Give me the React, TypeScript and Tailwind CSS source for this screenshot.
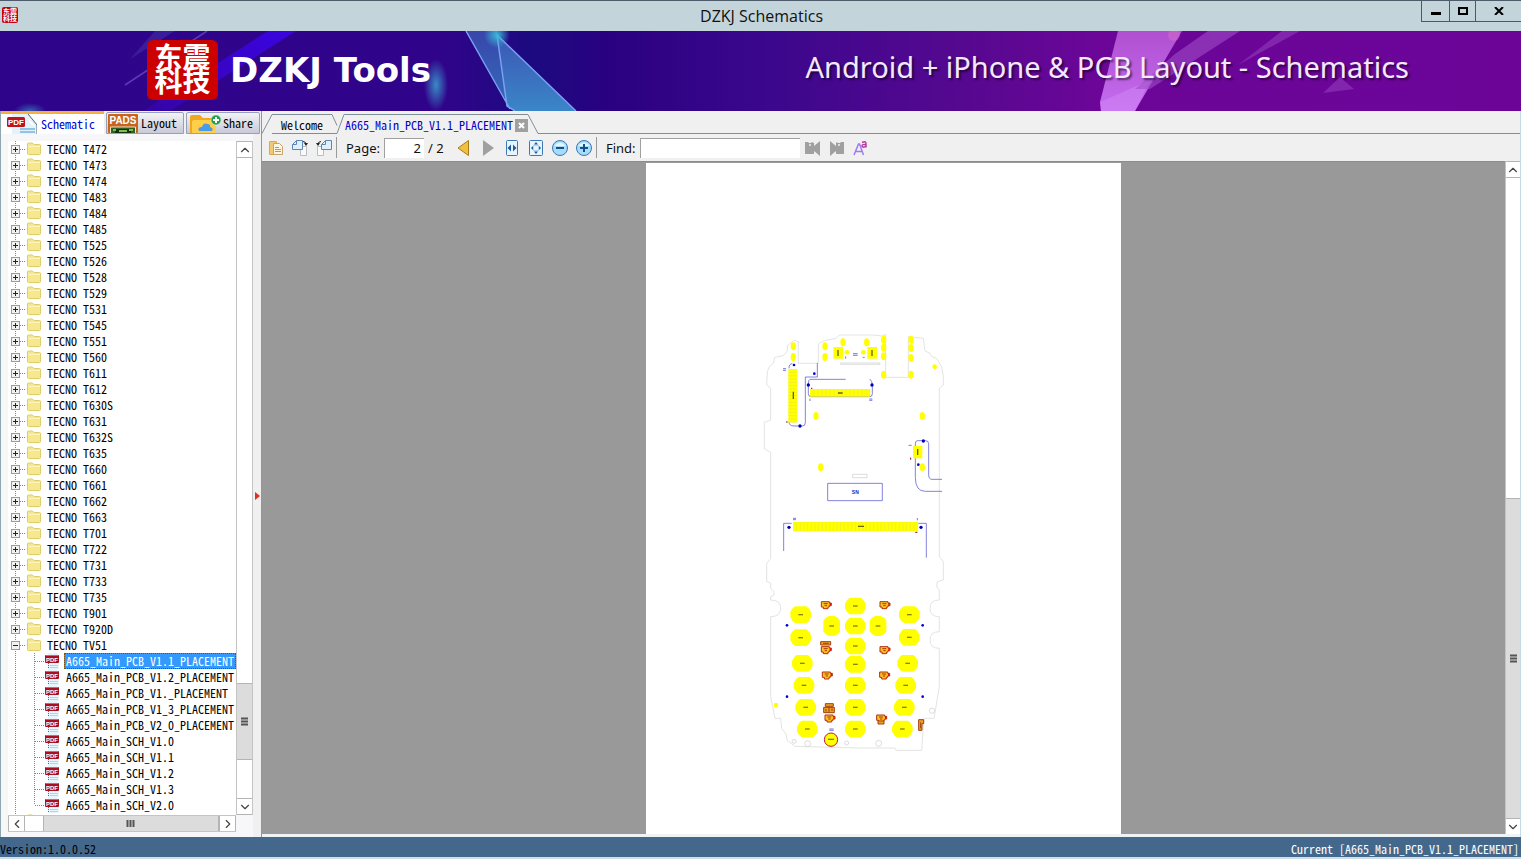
import { useState } from "react";
import type { ReactNode } from "react";
import { ChevronDown, ChevronLeft, ChevronRight, ChevronUp } from "lucide-react";

const models = [
  "T472", "T473", "T474", "T483", "T484", "T485", "T525", "T526", "T528",
  "T529", "T531", "T545", "T551", "T560", "T611", "T612", "T630S", "T631",
  "T632S", "T635", "T660", "T661", "T662", "T663", "T701", "T722", "T731",
  "T733", "T735", "T901", "T920D", "TV51",
];

const files = [
  "A665_Main_PCB_V1.1_PLACEMENT",
  "A665_Main_PCB_V1.2_PLACEMENT",
  "A665_Main_PCB_V1._PLACEMENT",
  "A665_Main_PCB_V1_3_PLACEMENT",
  "A665_Main_PCB_V2_0_PLACEMENT",
  "A665_Main_SCH_V1.0",
  "A665_Main_SCH_V1.1",
  "A665_Main_SCH_V1.2",
  "A665_Main_SCH_V1.3",
  "A665_Main_SCH_V2.0",
];

/* ---------- title bar and banner ---------- */

const TitleBar = () => (
  <header className="flex h-[31px] shrink-0 border-t border-[#4d5b6b] bg-[#c3d5db]">
    <div className="flex flex-1 items-center pb-0.5 pl-[2px]">
      <div className="flex h-4 w-4 items-center rounded-xs bg-[#c40010] px-px font-['Noto_Sans_CJK_SC',sans-serif] text-[7px] leading-[7px] font-bold text-white">
        <span className="w-3.5 break-all">东震科技</span>
      </div>
    </div>
    <h1 className="self-center font-['Open_Sans',sans-serif] text-[16px] text-[#111]">
      DZKJ Schematics
    </h1>
    <div className="flex flex-1 items-start justify-end">
      <div className="flex h-[21px] border-b border-l border-[#4d5960]">
        <button aria-label="Minimize" className="flex w-7 items-center justify-center border-r border-[#4d5960]">
          <svg width="10" height="10" viewBox="0 0 10 10">
            <path d="M0 6h10v3H0z" />
          </svg>
        </button>
        <button aria-label="Maximize" className="flex w-[26px] items-center justify-center border-r border-[#4d5960]">
          <svg width="10" height="8" viewBox="0 0 10 8">
            <path d="M1 1h8v6H1z" fill="none" stroke="#000" strokeWidth="2" />
          </svg>
        </button>
        <button aria-label="Close" className="flex w-[45px] items-center justify-center">
          <svg width="10" height="8" viewBox="0 0 10 8">
            <path d="M1 0l8 8M9 0L1 8" stroke="#000" strokeWidth="2" />
          </svg>
        </button>
      </div>
    </div>
  </header>
);

const BannerArt = () => (
  <svg className="absolute inset-0 h-full w-full" viewBox="0 0 1521 80" preserveAspectRatio="none" aria-hidden="true">
    <defs>
      <linearGradient id="base">
        <stop offset="0" stopColor="#2e058a" />
        <stop offset=".29" stopColor="#30048a" />
        <stop offset=".35" stopColor="#1c0a80" />
        <stop offset=".4" stopColor="#2a0180" />
        <stop offset=".5" stopColor="#3a078c" />
        <stop offset=".63" stopColor="#550890" />
        <stop offset=".72" stopColor="#6b0698" />
        <stop offset="1" stopColor="#6c0498" />
      </linearGradient>
      <linearGradient id="beam" x1="1" y1="0" x2="0" y2="1">
        <stop offset="0" stopColor="#3a04e0" />
        <stop offset=".6" stopColor="#3a04d0" stopOpacity=".8" />
        <stop offset="1" stopColor="#3a04c0" stopOpacity=".5" />
      </linearGradient>
      <linearGradient id="shard" x1="0" y1="0" x2="0" y2="1">
        <stop offset="0" stopColor="#3c56b4" />
        <stop offset="1" stopColor="#3a86c8" />
      </linearGradient>
      <linearGradient id="pink" x1="0" y1="0" x2="0" y2="1">
        <stop offset="0" stopColor="#b050d0" />
        <stop offset="1" stopColor="#c46cf0" />
      </linearGradient>
      <radialGradient id="glow">
        <stop offset="0" stopColor="#3cb8d8" />
        <stop offset="1" stopColor="#3cb8d8" stopOpacity="0" />
      </radialGradient>
    </defs>
    <rect width="1521" height="80" fill="url(#base)" />
    <path d="M268 0h28L170 80h-27z" fill="url(#beam)" />
    <path d="M207 0l-82 54" stroke="#8a70e0" strokeWidth="1.500" opacity=".5" />
    <path d="M155 0h20l-45 28z" fill="#4a40b0" opacity=".4" />
    <ellipse cx="30" cy="80" rx="16" ry="8" fill="url(#glow)" opacity=".5" />
    <ellipse cx="436" cy="54" rx="12" ry="26" fill="url(#glow)" opacity=".75" />
    <path d="M466 0h31l10 76 4 2z" fill="url(#shard)" opacity=".8" />
    <path d="M497 4l79 76h-61l-8-5z" fill="url(#shard)" />
    <path d="M466 0l44 78M497 4l10 71 8 5M497 4l79 76" fill="none" stroke="#7aa0f0" strokeWidth="1.500" />
    <circle cx="497" cy="4" r="13" fill="url(#glow)" />
    <path d="M1118 0h64l-47 80h-34l-1-9z" fill="url(#pink)" />
    <path d="M1101 80l-1-9 50-22-15 31z" fill="#d890f8" opacity=".4" />
    <path d="M1208 0h32l-90 58-15 0 40-35z" fill="#a04cc8" opacity=".6" />
    <path d="M1282 0h18l-62 34z" fill="#9848c0" opacity=".5" />
    <path d="M1340 46l14 12-31 4z" fill="#9848c0" opacity=".5" />
    <circle cx="1174" cy="4" r="6" fill="#f080c0" opacity=".3" />
  </svg>
);

const Banner = () => (
  <div className="relative h-20 shrink-0 overflow-hidden">
    <BannerArt />
    <div className="relative flex h-full items-center justify-between pr-28 pb-0.5 pl-[147px] text-white">
      <div className="flex items-center gap-3">
        <div className="flex h-[60px] w-[71px] items-center justify-center rounded-md bg-[#cc0000] pb-1 font-['Noto_Sans_CJK_SC',sans-serif] text-[28px] leading-6 font-bold">
          <span className="w-14 break-all">东震科技</span>
        </div>
        <span className="font-['DejaVu_Sans',sans-serif] text-[34px] leading-10 font-bold">DZKJ Tools</span>
      </div>
      <p className="pb-1.5 font-['Noto_Sans',sans-serif] text-[29px] leading-9 text-[#f4e8ff] text-shadow-[2px_2px_2px_#0008]">
        Android + iPhone &amp; PCB Layout - Schematics
      </p>
    </div>
  </div>
);

/* ---------- sidebar ---------- */

const PdfIcon = () => (
  <svg className="shrink-0" width="16" height="16" viewBox="0 0 16 16" aria-hidden="true">
    <path d="M4 0h9l2 3v13H4z" fill="#e6f5fc" />
    <path d="M6 12.500h8M6 14.500h8" stroke="#a9d9f2" />
    <path d="M4.500 10v6" stroke="#5a6a7a" strokeDasharray="1 1" />
    <rect x="1" y="2" width="14" height="8" rx="1" fill="#a8101c" />
    <path d="M2 2.500h12" stroke="#e0606a" />
    <text x="8" y="8.500" textAnchor="middle" fontSize="6" fontWeight="700" fill="#fff" fontFamily="Liberation Sans, sans-serif">PDF</text>
  </svg>
);

const FolderIcon = () => (
  <svg width="16" height="16" viewBox="0 0 16 16" aria-hidden="true">
    <path d="M1.500 12.500V3q0-1 1-1h4l1.500 1.500h5.500q1 0 1 1v8q0 1-1 1h-11q-1 0-1-1z" fill="#f6e88e" stroke="#e0cc68" />
    <path d="M2 5.500h12" stroke="#fcf5bc" />
  </svg>
);

// dotted trunk plus the +/- box of a folder row
const FolderBranch = ({ open }: { open: boolean }) => (
  <svg width="15" height="16" viewBox="0 0 15 16" aria-hidden="true">
    <path d="M4.500 0v16M9 8.500h6" stroke="#7c8894" strokeDasharray="1 1" />
    <rect x=".5" y="4.500" width="8" height="8" fill="#f2f2f2" stroke="#9a9a9a" />
    <path d={open ? "M2 8.500h5" : "M2 8.500h5M4.500 6v5"} stroke="#222" />
  </svg>
);

const FileBranch = ({ last }: { last: boolean }) => (
  <svg className="shrink-0" width="33" height="16" viewBox="0 0 33 16" aria-hidden="true">
    <path d={last ? "M4.500 0v16M23.500 0v8M24 8.500h9" : "M4.500 0v16M23.500 0v16M24 8.500h9"} stroke="#7c8894" strokeDasharray="1 1" />
  </svg>
);

const scrollButton = "flex shrink-0 items-center justify-center border border-[#b4b4b4] bg-white text-[#444]";

const Grip = ({ vertical }: { vertical?: boolean }) => (
  <svg width="9" height="9" viewBox="0 0 9 9" aria-hidden="true">
    <path d={vertical ? "M1 1.500h7M1 4.500h7M1 7.500h7" : "M1.500 1v7M4.500 1v7M7.500 1v7"} stroke="#555" strokeWidth="2" />
  </svg>
);

interface SidebarTabProps {
  label: string;
  active: boolean;
  icon: ReactNode;
  onSelect: () => void;
  className: string;
}

const SidebarTab = ({ label, active, icon, onSelect, className }: SidebarTabProps) => (
  <button
    onClick={onSelect}
    className={`flex items-center ${className} ${
      active
        ? "h-[23px] border-t-3 border-[#f5b040] bg-white text-[#0000d8]"
        : "h-[22px] rounded-t-xs border border-[#98a0b4] bg-linear-to-b from-[#f2f2f6] to-[#c8cad8] text-black"
    }`}
  >
    {icon}
    {label}
  </button>
);

const Sidebar = () => {
  const [tab, setTab] = useState("Schematic");
  const [selected, setSelected] = useState(files[0]);

  return (
    <aside className="flex w-[262px] shrink-0 flex-col border-r border-l border-r-[#8c98a0] border-l-[#8ea6b0] bg-[#f7f7f9]">
      <div className="flex h-[23px] shrink-0 items-end gap-[2px] bg-[#eef0f2]">
        <SidebarTab
          label="Schematic"
          active={tab === "Schematic"}
          onSelect={() => setTab("Schematic")}
          className="w-[103px] gap-1 pl-1.5"
          icon={
            <svg width="30" height="20" viewBox="0 0 30 20" aria-hidden="true">
              <path d="M5 0h17l8 9v11H5z" fill="#e4f2fa" />
              <path d="M21 0l9 11v9" fill="none" stroke="#5a6470" />
              <path d="M22 5l6 7q-6-1-6-7z" fill="#fff" />
              <path d="M13 15h15M13 18h15" stroke="#8cc4ea" strokeWidth="2" />
              <rect y="3" width="18" height="10" rx="1.500" fill="#c0141c" />
              <text x="9" y="11" textAnchor="middle" fontSize="8" fontWeight="700" fill="#fff" fontFamily="Liberation Sans, sans-serif">PDF</text>
            </svg>
          }
        />
        <SidebarTab
          label="Layout"
          active={tab === "Layout"}
          onSelect={() => setTab("Layout")}
          className="w-[78px] gap-0.5 pl-px"
          icon={
            <svg width="31" height="20" viewBox="0 0 31 20" aria-hidden="true">
              <rect y="1" width="30" height="19" rx="1" fill="#c8641e" />
              <path d="M2.500 20V14h25v6" fill="#2f5f28" stroke="#f2e6c8" />
              <path d="M7 16h16v4H7z" fill="#173015" />
              <path d="M5 17h3M21 17h4M11 18h8" stroke="#7ac24c" strokeWidth="2" />
              <text x="15" y="11" textAnchor="middle" fontSize="10" fontWeight="700" fill="#fff" fontFamily="Liberation Sans, sans-serif">PADS</text>
            </svg>
          }
        />
        <SidebarTab
          label="Share"
          active={tab === "Share"}
          onSelect={() => setTab("Share")}
          className="w-[74px] gap-0.5 pl-[3px]"
          icon={
            <svg width="31" height="20" viewBox="0 0 31 20" aria-hidden="true">
              <path d="M0 20V4q0-2 2-2h8l3 3h11q2 0 2 2v13z" fill="#f0a820" />
              <path d="M2 20V9q0-2 2-2h20q2 0 2 2v11z" fill="#ffcf4a" />
              <path d="M9 18q-2-4 3-4 1-5 6-3 3 1 2 3 4 1 2 4z" fill="#4a9be8" />
              <circle cx="26" cy="7" r="5" fill="#1fa04a" stroke="#e8f8e8" strokeWidth=".5" />
              <path d="M26 4v6M23 7h6" stroke="#fff" strokeWidth="2" />
            </svg>
          }
        />
      </div>

      <div className="flex min-h-0 flex-1">
        <div className="mt-[7px] mb-[5px] ml-[7px] flex min-w-0 flex-1 flex-col">
          <div className="flex min-h-0 flex-1">
            <ul className="min-w-0 flex-1 overflow-hidden bg-white pl-[3px]">
              {models.map((model) => (
                <li key={model} className="flex h-4 items-center">
                  <button className="flex items-center" aria-label={`Toggle TECNO ${model}`}>
                    <FolderBranch open={model === "TV51"} />
                    <FolderIcon />
                  </button>
                  <span className="pl-[5px] whitespace-nowrap">TECNO {model}</span>
                </li>
              ))}
              {files.map((file, i) => (
                <li key={file} className="flex h-4 items-center">
                  <FileBranch last={i === files.length - 1} />
                  <PdfIcon />
                  <button
                    onClick={() => setSelected(file)}
                    className={`ml-1 h-4 shrink-0 pr-[2px] pl-[2px] whitespace-nowrap ${
                      file === selected ? "bg-[#3399ff] text-white outline-1 -outline-offset-1 outline-[#7a4a10] outline-dotted" : ""
                    }`}
                  >
                    {file}
                  </button>
                </li>
              ))}
              <li className="flex h-4 items-center">
                <FolderBranch open={false} />
                <FolderIcon />
              </li>
            </ul>
            <div className="flex w-[17px] flex-col border-x border-[#c4c4c4] bg-white">
              <button aria-label="Scroll up" className={`${scrollButton} h-[17px] border-x-0`}>
                <ChevronUp size={14} />
              </button>
              <div className="flex-[527]" />
              <div className="flex flex-[76] items-center justify-center border-y border-[#b4b4b4] bg-[#dcdcdc]">
                <Grip vertical />
              </div>
              <div className="flex-[38]" />
              <button aria-label="Scroll down" className={`${scrollButton} h-[17px] border-x-0`}>
                <ChevronDown size={14} />
              </button>
            </div>
          </div>
          <div className="mr-[17px] flex h-[17px] border-y border-[#c4c4c4] bg-white">
            <button aria-label="Scroll left" className={`${scrollButton} w-[17px] border-y-0`}>
              <ChevronLeft size={14} />
            </button>
            <div className="flex-[18]" />
            <div className="flex flex-[176] items-center justify-center border-x border-[#b4b4b4] bg-[#dcdcdc]">
              <Grip />
            </div>
            <button aria-label="Scroll right" className={`${scrollButton} w-[17px] border-y-0`}>
              <ChevronRight size={14} />
            </button>
          </div>
        </div>
        <button aria-label="Collapse sidebar" className="flex w-2 items-center justify-center bg-[#f0f0f0] pt-5">
          <svg width="5" height="8" viewBox="0 0 5 8">
            <path d="M0 0v8l5-4z" fill="#e03020" />
          </svg>
        </button>
      </div>
    </aside>
  );
};

/* ---------- document tabs and toolbar ---------- */

const DocumentTabs = () => (
  <nav className="flex h-[23px] shrink-0 items-end bg-[#f0f0f0]">
    <button className="flex h-5 items-stretch">
      <svg width="10" height="20" viewBox="0 0 10 20" aria-hidden="true">
        <path d="M0 19.500L10 .5" fill="none" stroke="#7f8f98" />
      </svg>
      <span className="border-y border-t-[#7f8f98] border-b-[#7f8f98] px-[9px] leading-5">Welcome</span>
    </button>
    <button className="flex h-5 items-stretch text-[#0000c8]">
      <svg width="12" height="20" viewBox="0 0 12 20" aria-hidden="true">
        <path d="M0 .5l5 11M0 19.500h5L12 .5" fill="none" stroke="#7f8f98" />
      </svg>
      <span className="border-t border-[#7f8f98] pl-[1px] leading-5">A665_Main_PCB_V1.1_PLACEMENT</span>
    </button>
    <div className="flex h-5 border-t border-[#7f8f98] pt-1 pl-[2px]">
      <button aria-label="Close tab" className="flex h-[13px] w-[13px] items-center justify-center bg-[#a0a0a0]">
        <svg width="7" height="7" viewBox="0 0 7 7">
          <path d="M1 1l5 5M6 1L1 6" stroke="#fff" strokeWidth="2" />
        </svg>
      </button>
    </div>
    <svg width="11" height="20" viewBox="0 0 11 20" aria-hidden="true">
      <path d="M0 .5l10 19h1" fill="none" stroke="#7f8f98" />
    </svg>
    <div className="h-5 flex-1 border-b border-[#7f8f98]" />
  </nav>
);

interface ToolButtonProps {
  label: string;
  children: ReactNode;
}

const ToolButton = ({ label, children }: ToolButtonProps) => (
  <button aria-label={label} title={label} className="flex h-6 w-6 items-center justify-center">
    <svg width="16" height="16" viewBox="0 0 16 16">
      {children}
    </svg>
  </button>
);

const Separator = () => <div className="h-[21px] w-px bg-[#9a9a9a]" />;

const Toolbar = () => (
  <div className="flex h-[27px] shrink-0 items-center bg-[#f0f0f0] pl-[2px] font-['Noto_Sans',sans-serif] text-[13px] text-[#111]">
    <ToolButton label="Open">
      <path d="M1.500 1.500h7v13h-7z" fill="#f3c874" stroke="#e0a84c" />
      <path d="M5.500 3.500h6l3 3v8h-9z" fill="#fdf6e4" stroke="#c9a468" />
      <path d="M7 7.500h4M7 9.500h6M7 11.500h6" stroke="#b8965c" />
    </ToolButton>
    <ToolButton label="Rotate right">
      <path d="M8.500 6.500h6v9h-6z" fill="#fafafa" stroke="#b8bcc4" />
      <path d="M.5 4.500l4-4h6v9H.5z" fill="#e2f0fc" stroke="#5d86b8" />
      <path d="M.5 4.500h4v-4" fill="none" stroke="#5d86b8" />
      <path d="M11 1.500q3 0 3 3" fill="none" stroke="#222" />
      <path d="M12 3h4l-2 3z" fill="#222" />
    </ToolButton>
    <ToolButton label="Rotate left">
      <path d="M1.500 6.500h6v9h-6z" fill="#fafafa" stroke="#b8bcc4" />
      <path d="M5.500 4.500l4-4h6v9h-10z" fill="#e2f0fc" stroke="#5d86b8" />
      <path d="M5.500 4.500h4v-4" fill="none" stroke="#5d86b8" />
      <path d="M5 1.500q-3 0-3 3" fill="none" stroke="#222" />
      <path d="M0 3h4L2 6z" fill="#222" />
    </ToolButton>
    <Separator />
    <label htmlFor="page" className="pr-1 pl-[9px]">Page:</label>
    <input
      id="page"
      defaultValue="2"
      className="h-5 w-10 border-t border-l border-[#a0a0a0] bg-white pr-[3px] text-right outline-none"
    />
    <span className="w-7 pl-1 whitespace-nowrap">/ 2</span>
    <ToolButton label="Previous page">
      <path d="M12.500 .5v15L2 8z" fill="#f0c040" stroke="#a87c18" strokeLinejoin="round" />
    </ToolButton>
    <ToolButton label="Next page">
      <path d="M3 0v16l11-8z" fill="#a0a0a0" />
    </ToolButton>
    <ToolButton label="Fit width">
      <rect x="2.500" y=".5" width="11" height="15" rx="1" fill="#e6f4ff" stroke="#3c78b4" />
      <path d="M7 4.500v7L3.500 8zM9 4.500v7L12.500 8z" fill="#1c5ca0" />
    </ToolButton>
    <ToolButton label="Fit page">
      <rect x="1.500" y=".5" width="13" height="15" rx="1" fill="#e6f4ff" stroke="#3c78b4" />
      <path d="M8 2l2 2.500H6zM8 14l2-2.500H6zM3 8l2-2v4zM13 8l-2-2v4z" fill="#1c5ca0" />
      <path d="M5.500 5.500h5v5h-5z" fill="none" stroke="#7aaee0" strokeDasharray="1 1" />
    </ToolButton>
    <ToolButton label="Zoom out">
      <circle cx="8" cy="8" r="7.500" fill="#a8dcf8" stroke="#3878b4" />
      <path d="M2 6q6-7 12 0z" fill="#e4f6ff" />
      <path d="M4 8h8" stroke="#14508c" strokeWidth="2" />
    </ToolButton>
    <ToolButton label="Zoom in">
      <circle cx="8" cy="8" r="7.500" fill="#a8dcf8" stroke="#3878b4" />
      <path d="M2 6q6-7 12 0z" fill="#e4f6ff" />
      <path d="M4 8h8M8 4v8" stroke="#14508c" strokeWidth="2" />
    </ToolButton>
    <Separator />
    <label htmlFor="find" className="pr-1 pl-[9px]">Find:</label>
    <input
      id="find"
      className="h-5 w-40 border-t border-l border-[#a0a0a0] bg-white px-1 outline-none"
    />
    <ToolButton label="Find previous">
      <path d="M1 2h3l1 1h2l1-1 2 1v3l6-5v15l-6-5v3H1z" fill="#a0a0a0" />
      <circle cx="6" cy="5" r="1" fill="#f0f0f0" />
    </ToolButton>
    <ToolButton label="Find next">
      <path d="M16 2h-3l-1 1h-2L9 2 8 3v3L2 1v15l6-5v3h8z" fill="#a0a0a0" />
      <circle cx="11" cy="5" r="1" fill="#f0f0f0" />
    </ToolButton>
    <ToolButton label="Match case">
      <path d="M2 15L6.500 4h1l4 11M3.500 11.500h7" fill="none" stroke="#a07af0" strokeWidth="1.500" />
      <path d="M10 2.500q4.500-2 4 2v3M14 4.500q-4-.5-4 1.500 1 2.500 4 0" fill="none" stroke="#b83aa0" strokeWidth="1.500" />
    </ToolButton>
  </div>
);

/* ---------- board placement drawing ---------- */

const ovalPads = [
  [130, 64], [130, 96], [225, 64], [225, 96], [279, 52], [350, 52],
  [401, 44], [401, 68], [401, 94], [401, 149], [483, 44], [483, 69],
  [483, 99], [483, 149], [198, 273], [517, 273], [212, 427], [517, 427],
];

const keys = [
  [152, 869], [152, 938], [157, 1015], [162, 1081], [167, 1147], [172, 1212],
  [316, 843], [316, 903], [316, 963], [316, 1018], [316, 1081], [316, 1147], [316, 1212],
  [478, 869], [478, 937], [473, 1015], [467, 1081], [463, 1147], [457, 1212],
];

const leds = [
  [227, 838], [403, 838], [227, 973], [403, 973], [230, 1049], [402, 1049], [238, 1178], [393, 1178],
];

const vias = [
  [132, 120], [193, 146], [111, 901], [518, 901], [111, 1115], [518, 1115], [505, 419],
];

const anchors = [
  [175, 180], [366, 180], [150, 303], [520, 348], [117, 607], [513, 607],
];

// strip of solder pads with thin gaps between them
const PadStrip = ({ x, y, w, h, step, vertical }: { x: number; y: number; w: number; h: number; step: number; vertical?: boolean }) => {
  const count = Math.floor((vertical ? h : w) / step);
  return (
    <g>
      <rect x={x} y={y} width={w} height={h} fill="#ff0" />
      {Array.from({ length: count }, (_, i) => (
        <path
          key={i}
          d={vertical ? `M${x} ${y + (i + 1) * step}h${w}` : `M${x + (i + 1) * step} ${y}v${h}`}
          stroke="#e6e240"
          strokeWidth="1.500"
        />
      ))}
    </g>
  );
};

const Board = () => (
  <svg className="block w-[210px]" viewBox="0 0 630 1305" role="img" aria-label="A665 main board placement">
    <path
      d="M145 50l-13-4-20 16v16l-12 14-26 5-4 18-12 10-6 15-2 40 12 10v95l-19 7v80l19 10v318l-12 15v55l12 5v15l10 10v10l-10 5v10q30 0 30 25t-30 25v240l13 65h17l3 30 13 17 4 20 23 17 195 5h105l3 7h77l7-96h30l16-95V970q-28 0-28-25t28-25v-45q-28 0-28-25t28-25v-30l-8-10 2-15 18-5v-55l-12-15V190l12-10v-25l-5-30-15-25-15-5-5-10-15-7-5-38-45-5v122h-68V28l-12 5-25-3H268l-10 10-26 5-17 5-10 7v58h-60z"
      fill="none"
      stroke="#d4d4d4"
      strokeWidth="2"
    />
    <path d="M272 114h118v4H272zM308 448h43v10h-43z" fill="none" stroke="#ccc" strokeWidth="2" />
    <g fill="none" stroke="#ccc" strokeWidth="2">
      <circle cx="132" cy="1249" r="6" />
      <circle cx="173" cy="1256" r="9" />
      <circle cx="290" cy="1254" r="6" />
      <circle cx="386" cy="1255" r="9" />
      <circle cx="546" cy="1157" r="8" />
    </g>

    {/* silkscreen outlines */}
    <g fill="none" stroke="#4444cc" strokeWidth="2">
      <path d="M117 130q0-14 10-14M117 290q0 13 15 13h25q9 0 9-10V156h36v-42" />
      <path d="M287 163H180q-5 0-5 17v26q0 9 8 9h177q7 0 7-9v-26q0-12-8-18" />
      <path d="M576 463h-30q-10 0-10-14v-93q0-9-10-9h-24q-6 0-6 10v100q0 42 30 42h50" />
      <path d="M233 475h164v52H233zM101 678v-83h24M505 595h24v103" />
    </g>
    <text x="316" y="508" textAnchor="middle" fontSize="15" fontWeight="700" fill="#2222bb" fontFamily="Liberation Sans, sans-serif">SN</text>
    <path d="M309 86h14M309 91h14M99 131h9M99 136h9M358 222h9M358 226h9M129 580h9M129 584h9M238 1212h13M238 1216h13M180 221v7M502 579v7M287 94v7M476 361h9M338 97h6" stroke="#3333cc" strokeWidth="2" />

    <PadStrip x={115} y={132} w={27} h={160} step={10} vertical />
    <PadStrip x={180} y={192} w={180} h={23} step={12} />
    <PadStrip x={129} y={591} w={374} h={28} step={11} />
    <rect x="250" y="66" width="29" height="35" fill="#ff0" />
    <rect x="352" y="66" width="29" height="35" fill="#ff0" />
    <rect x="489" y="363" width="28" height="37" fill="#ff0" />
    {ovalPads.map(([x, y]) => (
      <ellipse key={`${x}-${y}`} cx={x} cy={y} rx="8" ry="12" fill="#ff0" />
    ))}
    <g fill="#ff0">
      <circle cx="291" cy="82" r="7" />
      <circle cx="340" cy="82" r="7" />
      <circle cx="554" cy="125" r="7" />
      <circle cx="78" cy="1140" r="7" />
    </g>
    <path d="M264 75v18M366 75v18M503 372v18M130 200v22M264 204h14M324 604h18" stroke="#6b6400" strokeWidth="4" />
    <path d="M108 291h5M482 398v6M496 622h6M183 190h4" stroke="#800" strokeWidth="3" />

    {vias.map(([x, y]) => (
      <circle key={`${x}-${y}`} cx={x} cy={y} r="4" fill="#0000dd" />
    ))}
    {anchors.map(([x, y]) => (
      <circle key={`${x}-${y}`} cx={x} cy={y} r="5" fill="#0000bb" />
    ))}

    {/* keypad */}
    {keys.map(([x, y]) => (
      <g key={`${x}-${y}`}>
        <path d={`M${x - 17} ${y - 25}h34q9 5 14 18v14q-5 13-14 18h-34q-9-5-14-18v-14q5-13 14-18z`} fill="#ff0" />
        <path d={`M${x - 7} ${y}h14`} stroke="#8a8200" strokeWidth="4" />
      </g>
    ))}
    {[245, 384].map((x) => (
      <g key={x}>
        <path d={`M${x - 8} 873h16q12 4 17 14v32q-5 10-17 14h-16q-12-4-17-14v-32q5-10 17-14z`} fill="#ff0" />
        <path d={`M${x - 7} 903h14`} stroke="#8a8200" strokeWidth="4" />
      </g>
    ))}
    {leds.map(([x, y]) => (
      <g key={`${x}-${y}`}>
        <path d={`M${x - 13} ${y - 8}h24v4h6v8h-6v4h-4v5h-14v-5h-6z`} fill="#ffc020" stroke="#b03010" strokeWidth="3" />
        <path d={`M${x - 6} ${y - 2}h12M${x - 3} ${y + 4}h7`} stroke="#a03808" strokeWidth="3" />
        <path d={`M${x + 14} ${y - 4}v8`} stroke="#e01010" strokeWidth="4" />
      </g>
    ))}
    <g fill="#f0a020" stroke="#a04010" strokeWidth="3">
      <path d="M212 950h30v10h-30zM226 1136h24v8h-24zM221 1147h32v16h-32zM384 1188h18v9h-18zM506 1184h15v12h-5v20h-10z" />
      <path d="M219 955h17M228 1152v8M237 1147v16M246 1150v8M512 1192v18" />
    </g>
    <circle cx="243" cy="1244" r="20" fill="#ff0" stroke="#c01838" strokeWidth="3" />
    <path d="M234 1243h18" stroke="#8a8200" strokeWidth="4" />
  </svg>
);

const Viewer = () => (
  <div className="flex min-h-0 flex-1">
    <div className="flex min-w-0 flex-1 justify-center overflow-hidden border-t border-[#8c8c8c] bg-[#999] pt-px">
      <div className="flex w-[475px] items-start bg-white pt-[162px] pl-[104px]">
        <Board />
      </div>
    </div>
    <div className="flex w-[15px] flex-col border-l border-[#c4c4c4] bg-white">
      <button aria-label="Scroll up" className={`${scrollButton} h-[17px] border-x-0`}>
        <ChevronUp size={14} />
      </button>
      <div className="flex-[321]" />
      <div className="flex flex-[320] items-center justify-center border-y border-[#b4b4b4] bg-[#dcdcdc]">
        <Grip vertical />
      </div>
      <button aria-label="Scroll down" className={`${scrollButton} h-[15px] border-0`}>
        <ChevronDown size={14} />
      </button>
    </div>
  </div>
);

export default function App() {
  return (
    <div className="flex h-screen flex-col overflow-hidden bg-[#cfdfe6] font-['Noto_Sans_Mono_CJK_SC','Liberation_Mono',monospace] text-[12px] leading-4 text-black">
      <TitleBar />
      <Banner />
      <main className="flex min-h-0 flex-1 border-r border-[#c4dde4]">
        <Sidebar />
        <section className="flex min-w-0 flex-1 flex-col border-b-3 border-[#eef4f6]">
          <DocumentTabs />
          <Toolbar />
          <Viewer />
        </section>
      </main>
      <footer className="mb-[2px] flex h-5 shrink-0 items-end justify-between bg-[#44688c] pr-[2px]">
        <span>Version:1.0.0.52</span>
        <span className="text-white">Current [A665_Main_PCB_V1.1_PLACEMENT]</span>
      </footer>
    </div>
  );
}
